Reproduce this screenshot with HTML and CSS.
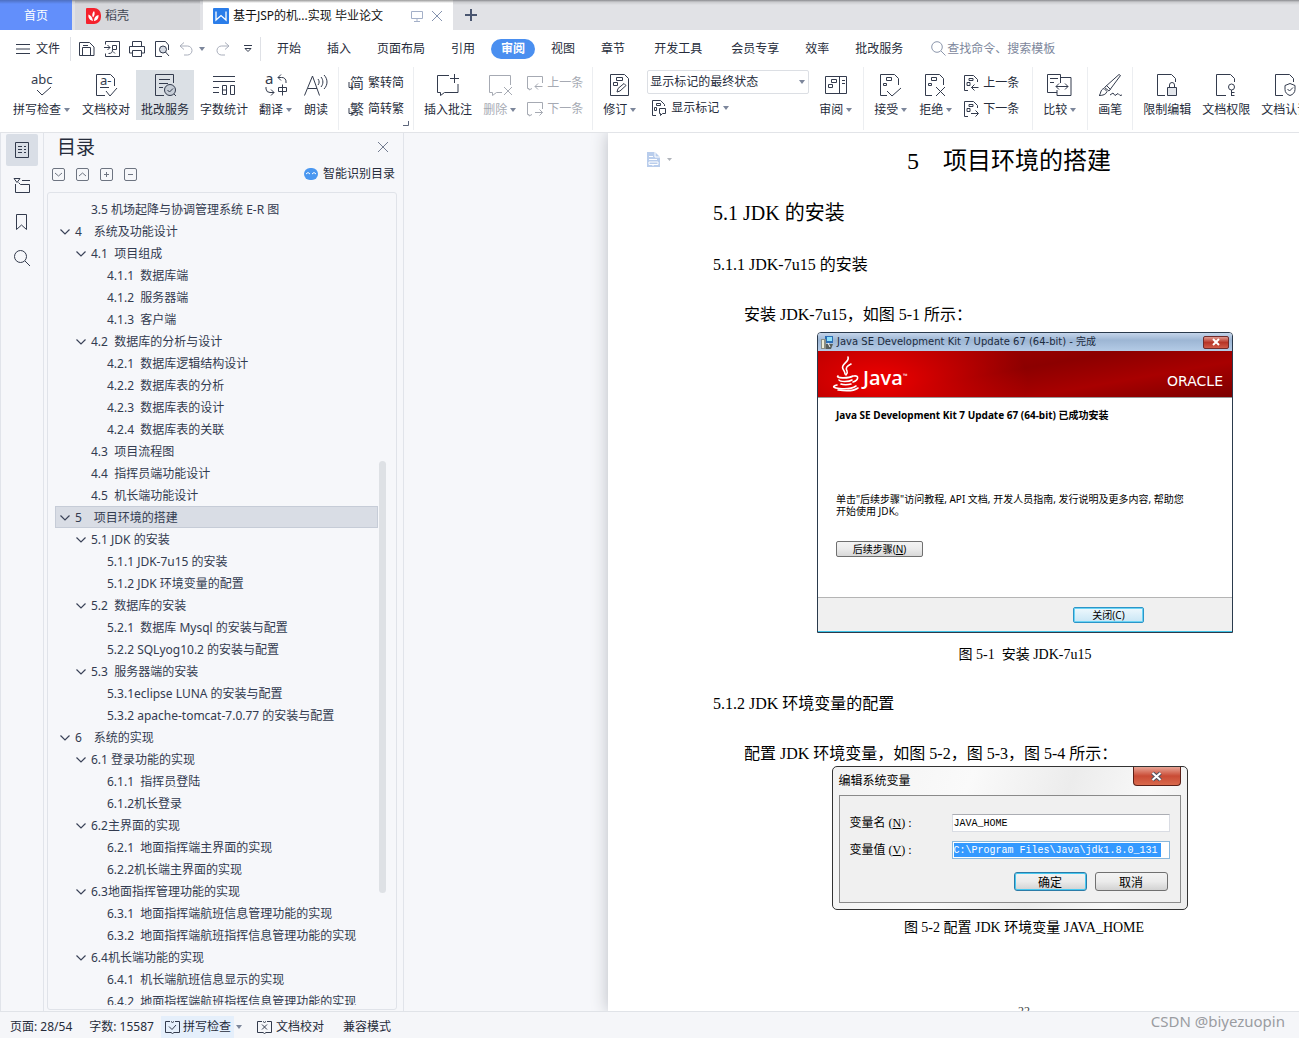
FILE: index.html
```html
<!DOCTYPE html>
<html lang="zh-CN">
<head>
<meta charset="utf-8">
<title>基于JSP的机...实现 毕业论文</title>
<link rel="stylesheet" href="styles.css">
</head>
<body>
<svg class="sprite" aria-hidden="true">
  <symbol id="caret" viewBox="0 0 6 4"><path d="M0 0h6L3 4z" fill="#7c869b"/></symbol>
  <symbol id="chev" viewBox="0 0 10 6"><path d="M.5.5 5 5 9.500.5" fill="none" stroke="#3b4358" stroke-width="1.200"/></symbol>
  <symbol id="cross" viewBox="0 0 12 12"><path d="M1 1l10 10M11 1 1 11"/></symbol>
  <symbol id="prev-doc" viewBox="0 0 16 16"><path d="M5 15.500H1.500V.5h9l4 4V7M6 3.500h4v2H6zM4 7.500h3v3H4zM15.500 12.500H8.500M11.500 9.500l-3 3 3 3"/></symbol>
  <symbol id="next-doc" viewBox="0 0 16 16"><path d="M5 15.500H1.500V.5h9l4 4V7M6 3.500h4v2H6zM4 7.500h3v3H4zM8 12.500h7M12.500 9.500l3 3-3 3"/></symbol>
</svg>

<header class="tabs">
  <button class="tab tab-home" type="button">首页</button>
  <button class="tab tab-store" type="button">
    <svg width="15" height="16" viewBox="0 0 15 16"><path d="M1 0h7a7 7 0 0 1 7 7v2a7 7 0 0 1-7 7H1a1 1 0 0 1-1-1V1a1 1 0 0 1 1-1z" fill="#f5222d"/><path d="M7 13C3 12 2 9 2.500 6.500 5 7.500 6.500 9.500 7 13zM7 9.500C5.500 7 6.500 4.500 8 3c1.200 2 .8 4.500-1 6.500zM8 13c0-3.500 1.500-5.500 4.500-6C12.800 10 11.500 12.500 8 13z" fill="#fff"/></svg>
    稻壳</button>
  <div class="tab tab-doc">
    <svg width="16" height="16" viewBox="0 0 16 16"><rect width="16" height="16" rx="1" fill="#2b7de9"/><path d="M3 3.500v8.500l5-4.500 5 4.500V3.500" fill="none" stroke="#fff" stroke-width="1.300"/></svg>
    <span class="tab-name">基于JSP的机...实现 毕业论文</span>
    <svg class="line pale" width="12" height="12" viewBox="0 0 12 12"><path d="M.5 1.500h11v7H.5zM6 8.500v3M3 11.500h6"/></svg>
    <button class="bare" type="button" aria-label="关闭标签"><svg class="line pale2" width="12" height="12"><use href="#cross"/></svg></button>
  </div>
  <button class="bare tab-add" type="button" aria-label="新建标签"><svg width="12" height="12" viewBox="0 0 12 12"><path d="M6 0v12M0 6h12" stroke="#4a5670" stroke-width="2"/></svg></button>
</header>

<nav class="menu">
  <button class="bare file" type="button"><svg class="line" width="14" height="12" viewBox="0 0 14 12"><path d="M0 1.500h14M0 6h14M0 10.500h14"/></svg>文件</button>
  <div class="quick">
    <button class="bare" type="button" aria-label="保存"><svg class="line" width="16" height="16" viewBox="0 0 16 16"><path d="M.5 14.500V1.500h10l4.500 4.500v8.500zM3.500 14V6.500h8V14M4 4.500h5"/></svg></button>
    <button class="bare" type="button" aria-label="输出为PDF"><svg class="line" width="16" height="16" viewBox="0 0 16 16"><path d="M1.500 3.500v-3h14v15h-14v-3M0 6.500h6M3.500 4l2.500 2.500L3.500 9M8.500 8.500v-4h4v4h-4c0 3-1 4-4 4M9 10.500l2 2"/></svg></button>
    <button class="bare" type="button" aria-label="打印"><svg class="line" width="16" height="16" viewBox="0 0 16 16"><path d="M3.500 5.500v-5h9v5M3.500 12H.5V5.500h15V12h-3M3.500 9.500h9v6h-9z"/></svg></button>
    <button class="bare" type="button" aria-label="打印预览"><svg class="line" width="16" height="16" viewBox="0 0 16 16"><path d="M14.500 9V4l-3-3.500h-10v15H8"/><circle cx="9" cy="8.500" r="3.500" fill="#d5dae3"/><path d="M11.500 11l3.500 4"/></svg></button>
    <button class="bare undo" type="button" aria-label="撤销"><svg class="line dim" width="14" height="16" viewBox="0 0 14 16"><path d="M5 1.500 1 5l4 3.500M1 5h7.500a4.500 4.500 0 0 1 0 9H5"/></svg><svg width="6" height="4"><use href="#caret"/></svg></button>
    <button class="bare" type="button" aria-label="恢复"><svg class="line dim" width="14" height="16" viewBox="0 0 14 16"><path d="M9 1.500 13 5 9 8.500M13 5H5.500a4.500 4.500 0 0 0 0 9H9"/></svg></button>
    <button class="bare more" type="button" aria-label="更多"><svg class="line" width="8" height="8" viewBox="0 0 8 8"><path d="M0 .5h8M1 3.500 4 6.500 7 3.500z"/></svg></button>
  </div>
  <div class="menu-items">
    <a href="#">开始</a><a href="#">插入</a><a href="#">页面布局</a><a href="#">引用</a><a href="#" class="on">审阅</a><a href="#">视图</a><a href="#">章节</a><a href="#" class="wide">开发工具</a><a href="#">会员专享</a><a href="#">效率</a><a href="#">批改服务</a>
  </div>
  <label class="search"><svg class="line" width="15" height="15" viewBox="0 0 15 15"><circle cx="6" cy="6" r="5.300"/><path d="M10 10l4.500 4.500"/></svg><input type="text" placeholder="查找命令、搜索模板" aria-label="查找命令"></label>
</nav>

<div class="ribbon">
  <div class="group">
    <button class="big" type="button"><svg class="line" width="24" height="24" viewBox="0 0 24 24"><text x="1" y="11" class="abc">abc</text><path d="M7 17l5 5 9-8"/></svg><span>拼写检查<svg class="car" width="6" height="4"><use href="#caret"/></svg></span></button>
    <button class="big" type="button"><svg class="line" width="24" height="24" viewBox="0 0 24 24"><path d="M11 22.500H2.500v-21h14l4 4V13M15 14.500H6M12 18l4 5 7-8"/><text x="6" y="12" class="aa">a-</text></svg><span>文档校对</span></button>
    <button class="big active" type="button"><svg class="line" width="24" height="24" viewBox="0 0 24 24"><path d="M11 22.500H2.500v-21h18V10M6 6.500h11M6 10.500h9M6 14.500h4"/><circle cx="17" cy="17" r="5.500" fill="#c6cdd6"/><path d="M14.500 17l2 2 3.500-3.500M21 21l2 2"/></svg><span>批改服务</span></button>
    <button class="big" type="button"><svg class="line" width="24" height="24" viewBox="0 0 24 24"><path d="M1 3.500h22M1 8.500h22M1 14.500h6M1 19.500h6M10.500 12.500h4v9h-4zM10.500 17h4M18.500 12.500h4v9h-4z"/></svg><span>字数统计</span></button>
    <button class="big" type="button"><svg class="line" width="24" height="24" viewBox="0 0 24 24"><text x="1" y="11" class="ax">a</text><path d="M17 1.500 14 4.500l3 3M14 4.500h3.500a4 4 0 0 1 4.500 4.500v1M2 14v2a4 4 0 0 0 4 3.500h4M7 16.500l3 3-3 3M14.500 14.500h8v4h-8zM18.500 11.500v11"/></svg><span>翻译<svg class="car" width="6" height="4"><use href="#caret"/></svg></span></button>
    <button class="big" type="button"><svg class="line" width="24" height="24" viewBox="0 0 24 24"><path d="M.5 22.500 8.500 3l7 19.500M4 15.500h9M14 6c1.500 2 1.500 4 0 6M17 4c2.500 3 2.500 7 0 10M20 2c4 4 4 10 0 14"/></svg><span>朗读</span></button>
  </div>
  <div class="group convert">
    <div class="stack">
      <button class="small" type="button"><svg class="line" width="16" height="16" viewBox="0 0 16 16"><text x="2" y="13" class="han">简</text><path d="M1 7v5.500h4M3 10.500l2 2-2 2"/></svg>繁转简</button>
      <button class="small" type="button"><svg class="line" width="16" height="16" viewBox="0 0 16 16"><text x="2" y="13" class="han">繁</text><path d="M1 7v5.500h4M3 10.500l2 2-2 2"/></svg>简转繁</button>
    </div>
    <svg class="launch" width="6" height="5" viewBox="0 0 6 5"><path d="M5.500 0v4.500H0" fill="none" stroke="#5d667b"/></svg>
  </div>
  <div class="group">
    <button class="big" type="button"><svg class="line" width="24" height="24" viewBox="0 0 24 24"><path d="M13 2.500H1.500v17h3v3l4-3h13.500V11M18.500 1v9M14 5.500h9"/></svg><span>插入批注</span></button>
    <button class="big off" type="button"><svg class="line" width="24" height="24" viewBox="0 0 24 24"><path d="M22.500 12V2.500h-21v17h3v3l4-3H14M16 14l8 8M24 14l-8 8"/></svg><span>删除<svg class="car" width="6" height="4"><use href="#caret"/></svg></span></button>
    <div class="stack">
      <button class="small off" type="button"><svg class="line" width="16" height="16" viewBox="0 0 16 16"><path d="M15.500 8V1.500H.5v12H2V15l3-1.500M15.500 11.500H8M11 8.500l-3 3 3 3"/></svg>上一条</button>
      <button class="small off" type="button"><svg class="line" width="16" height="16" viewBox="0 0 16 16"><path d="M15.500 8V1.500H.5v12H2V15l3-1.500M8 11.500h7.500M12.500 8.500l3 3-3 3"/></svg>下一条</button>
    </div>
  </div>
  <div class="group">
    <button class="big" type="button"><svg class="line" width="24" height="24" viewBox="0 0 24 24"><path d="M2.500 1.500h14l4 4v17h-18zM8.500 4.500h6v3h-6zM5.500 9.500h4v3h-4zM9 19l1-3.500 6-5 2 2-6 5.500z"/></svg><span>修订<svg class="car" width="6" height="4"><use href="#caret"/></svg></span></button>
    <div class="stack marks">
      <div class="select"><select aria-label="标记显示状态"><option>显示标记的最终状态</option></select><svg width="6" height="4"><use href="#caret"/></svg></div>
      <button class="small" type="button"><svg class="line" width="16" height="16" viewBox="0 0 16 16"><path d="M5 15.500H1.500V.5h8l4 4V6M5.500 3.500h4v2h-4zM3.500 7.500h2v3h-2zM8.500 8.500h6v5h-3l-2 2v-2h-1z"/></svg>显示标记<svg width="6" height="4"><use href="#caret"/></svg></button>
    </div>
    <button class="big" type="button"><svg class="line" width="24" height="24" viewBox="0 0 24 24"><path d="M1.500 3.500h21v17h-21zM15.500 3.500v17M7.500 6.500h5v3h-5zM4.500 11.500h4v3h-4zM18 7.500h3M18 10.500h3"/></svg><span>审阅<svg class="car" width="6" height="4"><use href="#caret"/></svg></span></button>
  </div>
  <div class="group accept">
    <button class="big" type="button"><svg class="line" width="24" height="24" viewBox="0 0 24 24"><path d="M8 22.500H1.500v-21h14l4 4V12M7.500 4.500h5v3h-5zM4.500 10.500h3v2h-3zM8 18l5 5 9-8"/></svg><span>接受<svg class="car" width="6" height="4"><use href="#caret"/></svg></span></button>
    <button class="big" type="button"><svg class="line" width="24" height="24" viewBox="0 0 24 24"><path d="M8 22.500H1.500v-21h14l4 4V12M7.500 4.500h5v3h-5zM4.500 10.500h3v2h-3zM12 14l9 9M21 14l-9 9"/></svg><span>拒绝<svg class="car" width="6" height="4"><use href="#caret"/></svg></span></button>
    <div class="stack">
      <button class="small" type="button"><svg class="line" width="16" height="16"><use href="#prev-doc"/></svg>上一条</button>
      <button class="small" type="button"><svg class="line" width="16" height="16"><use href="#next-doc"/></svg>下一条</button>
    </div>
  </div>
  <div class="group">
    <button class="big" type="button"><svg class="line" width="24" height="24" viewBox="0 0 24 24"><path d="M9 19.500H-.5v-18h13V4M2 5.500h8M2 9.500h4M12.500 4.500h10.500v18h-14V17M8 13.500h12M11 10.500l-3 3 3 3M17 10.500l3 3-3 3M12.500 4v6"/></svg><span>比较<svg class="car" width="6" height="4"><use href="#caret"/></svg></span></button>
  </div>
  <div class="group">
    <button class="big" type="button"><svg class="line" width="24" height="24" viewBox="0 0 24 24"><path d="M1 22.500c2-1 1-6 5-7l3 3c-1 3-4 4-8 4zM6.500 14.500 21 1.500l1.500 1L11 18zM8.500 12.500l4 4M12 22l3-2 2 2.500 3-2 2 2 2-.5"/></svg><span>画笔</span></button>
  </div>
  <div class="group last">
    <button class="big" type="button"><svg class="line" width="24" height="24" viewBox="0 0 24 24"><path d="M10 22.500H2.500v-21h14l4 4V9M14.500 14v-2a2.500 2.500 0 0 1 5 0v2"/><path d="M12.500 14.500h9v8h-9z" fill="#e3e6eb"/></svg><span>限制编辑</span></button>
    <button class="big" type="button"><svg class="line" width="24" height="24" viewBox="0 0 24 24"><path d="M12 22.500H2.500v-21h14l4 4V9M17.500 17v6M17.500 19.500h3M17.500 22.500h3"/><circle cx="17.500" cy="14" r="3"/></svg><span>文档权限</span></button>
    <button class="big" type="button"><svg class="line" width="24" height="24" viewBox="0 0 24 24"><path d="M10 22.500H2.500v-21h14l4 4V9M17 10.500l5 2v4c0 3-2 5-5 6-3-1-5-3-5-6v-4zM14.500 16l2 2 3.500-3.500"/></svg><span>文档认证</span></button>
  </div>
</div>

<main class="work">
  <aside class="rail">
    <button class="on" type="button" aria-label="目录"><svg class="line" width="16" height="16" viewBox="0 0 16 16"><path d="M1.500.5h13v15h-13zM4 4.500h4M10 4.500h2M4 7.500h4M10 7.500h2M4 10.500h4M10 10.500h2"/></svg></button>
    <button type="button" aria-label="章节"><svg class="line" width="16" height="16" viewBox="0 0 16 16"><path d="M0 .5h6L3 4.500zM8 2.500h8M1.500 6v8.500h14v-8h-9l-2-2"/></svg></button>
    <button type="button" aria-label="书签"><svg class="line" width="16" height="16" viewBox="0 0 16 16"><path d="M2.500.5h10v15l-5-4.500-5 4.500z"/></svg></button>
    <button type="button" aria-label="查找"><svg class="line" width="16" height="16" viewBox="0 0 16 16"><circle cx="6.500" cy="6.500" r="6"/><path d="M11 11l5 5"/></svg></button>
  </aside>

  <section class="panel">
    <div class="panel-head"><h2>目录</h2><button class="bare" type="button" aria-label="关闭目录"><svg class="line" width="12" height="12"><use href="#cross"/></svg></button></div>
    <div class="panel-tools">
      <button type="button" aria-label="展开"><svg width="7" height="7" viewBox="0 0 7 7"><path d="M0 2l3.500 3L7 2"/></svg></button>
      <button type="button" aria-label="折叠"><svg width="7" height="7" viewBox="0 0 7 7"><path d="M0 5l3.500-3L7 5"/></svg></button>
      <button type="button" aria-label="增加"><svg width="7" height="7" viewBox="0 0 7 7"><path d="M1 3.500h5M3.500 1v5"/></svg></button>
      <button type="button" aria-label="减少"><svg width="7" height="7" viewBox="0 0 7 7"><path d="M1 3.500h5"/></svg></button>
      <a class="smart" href="#"><svg width="14" height="12" viewBox="0 0 14 12"><rect width="14" height="12" rx="6" fill="#4a97f0"/><path d="M2 6q2-3 4 0M8 6q2-3 4 0" fill="none" stroke="#fff"/></svg>智能识别目录</a>
    </div>
    <div class="toc">
      <ul>
        <li><a class="l2" href="#">3.5 机场起降与协调管理系统 E-R 图</a></li>
        <li><a class="l1" href="#"><svg><use href="#chev"/></svg>4&emsp;系统及功能设计</a></li>
        <li><a class="l2" href="#"><svg><use href="#chev"/></svg>4.1  项目组成</a></li>
        <li><a class="l3" href="#">4.1.1  数据库端</a></li>
        <li><a class="l3" href="#">4.1.2  服务器端</a></li>
        <li><a class="l3" href="#">4.1.3  客户端</a></li>
        <li><a class="l2" href="#"><svg><use href="#chev"/></svg>4.2  数据库的分析与设计</a></li>
        <li><a class="l3" href="#">4.2.1  数据库逻辑结构设计</a></li>
        <li><a class="l3" href="#">4.2.2  数据库表的分析</a></li>
        <li><a class="l3" href="#">4.2.3  数据库表的设计</a></li>
        <li><a class="l3" href="#">4.2.4  数据库表的关联</a></li>
        <li><a class="l2" href="#">4.3  项目流程图</a></li>
        <li><a class="l2" href="#">4.4  指挥员端功能设计</a></li>
        <li><a class="l2" href="#">4.5  机长端功能设计</a></li>
        <li><a class="l1 sel" href="#"><svg><use href="#chev"/></svg>5&emsp;项目环境的搭建</a></li>
        <li><a class="l2" href="#"><svg><use href="#chev"/></svg>5.1 JDK 的安装</a></li>
        <li><a class="l3" href="#">5.1.1 JDK-7u15 的安装</a></li>
        <li><a class="l3" href="#">5.1.2 JDK 环境变量的配置</a></li>
        <li><a class="l2" href="#"><svg><use href="#chev"/></svg>5.2  数据库的安装</a></li>
        <li><a class="l3" href="#">5.2.1  数据库 Mysql 的安装与配置</a></li>
        <li><a class="l3" href="#">5.2.2 SQLyog10.2 的安装与配置</a></li>
        <li><a class="l2" href="#"><svg><use href="#chev"/></svg>5.3  服务器端的安装</a></li>
        <li><a class="l3" href="#">5.3.1eclipse LUNA 的安装与配置</a></li>
        <li><a class="l3" href="#">5.3.2 apache-tomcat-7.0.77 的安装与配置</a></li>
        <li><a class="l1" href="#"><svg><use href="#chev"/></svg>6&emsp;系统的实现</a></li>
        <li><a class="l2" href="#"><svg><use href="#chev"/></svg>6.1 登录功能的实现</a></li>
        <li><a class="l3" href="#">6.1.1  指挥员登陆</a></li>
        <li><a class="l3" href="#">6.1.2机长登录</a></li>
        <li><a class="l2" href="#"><svg><use href="#chev"/></svg>6.2主界面的实现</a></li>
        <li><a class="l3" href="#">6.2.1  地面指挥端主界面的实现</a></li>
        <li><a class="l3" href="#">6.2.2机长端主界面的实现</a></li>
        <li><a class="l2" href="#"><svg><use href="#chev"/></svg>6.3地面指挥管理功能的实现</a></li>
        <li><a class="l3" href="#">6.3.1  地面指挥端航班信息管理功能的实现</a></li>
        <li><a class="l3" href="#">6.3.2  地面指挥端航班指挥信息管理功能的实现</a></li>
        <li><a class="l2" href="#"><svg><use href="#chev"/></svg>6.4机长端功能的实现</a></li>
        <li><a class="l3" href="#">6.4.1  机长端航班信息显示的实现</a></li>
        <li><a class="l3" href="#">6.4.2  地面指挥端航班指挥信息管理功能的实现</a></li>
      </ul>
      <div class="track"><div class="thumb"></div></div>
    </div>
  </section>

  <section class="canvas">
    <article class="paper">
      <div class="para-tool"><svg width="13" height="15" viewBox="0 0 13 15"><path d="M0 0h8l5 5v10H0z" fill="#b9cdec"/><path d="M8 0v5h5M2 4.500h4M2 7.500h8M2 10h9v2.500H2zM6 12v2" fill="none" stroke="#fff"/></svg><svg width="5" height="3" viewBox="0 0 5 3"><path d="M0 0h5L2.500 3z" fill="#b0b4bb"/></svg></div>
      <h1>5&emsp;项目环境的搭建</h1>
      <h2>5.1 JDK 的安装</h2>
      <h3>5.1.1 JDK-7u15 的安装</h3>
      <p>安装 JDK-7u15，如图 5-1 所示：</p>
      <figure>
        <div class="setup">
          <div class="setup-title"><svg width="13" height="13" viewBox="0 0 13 13"><path d="M4 0h8v7H4z" fill="#2c6fb5"/><path d="M6 1h5v4H6z" fill="#8fe0f7"/><path d="M0 3h5v10H0z" fill="#8b8f86"/><path d="M1 4h2v8H1z" fill="#efefd8"/><path d="M5 8h7l-2 5H5z" fill="#59605c"/><path d="M7 7l2 4" stroke="#fff"/></svg><span>Java SE Development Kit 7 Update 67 (64-bit) - 完成</span><button type="button" aria-label="关闭"><svg width="8" height="6" viewBox="0 0 8 6"><path d="M1 0l6 6M7 0 1 6" stroke="#fff" stroke-width="2"/></svg></button></div>
          <div class="setup-banner">
            <svg width="28" height="36" viewBox="0 0 28 36"><g fill="none" stroke="#fff" stroke-width="1.600" stroke-linecap="round"><path d="M16 1c2 5-8 7-5 12 1 2 2 3 2 5M19 8c-4 2-6 4-4 7 1 2 0 3-1 4"/><path d="M6 20c-3 2 10 3 15 0M7 24c1 2 10 2 13 0M9 28c2 1 7 1 10 0M22 20c5-1 5 4-1 6M5 29c-12 3 12 6 19 1M6 34c7 1 16 1 20-2" /></g></svg>
            <span class="java">Java<small>™</small></span><span class="oracle">ORACLE</span>
          </div>
          <div class="setup-body">
            <strong>Java SE Development Kit 7 Update 67 (64-bit) 已成功安装</strong>
            <div class="setup-text">单击"后续步骤"访问教程, API 文档, 开发人员指南, 发行说明及更多内容, 帮助您<br>开始使用 JDK。</div>
            <button type="button">后续步骤(<u>N</u>)</button>
          </div>
          <div class="setup-foot"><button type="button">关闭(C)</button></div>
        </div>
        <figcaption>图 5-1&nbsp; 安装 JDK-7u15</figcaption>
      </figure>
      <h3>5.1.2 JDK 环境变量的配置</h3>
      <p>配置 JDK 环境变量，如图 5-2，图 5-3，图 5-4 所示：</p>
      <figure class="second">
        <div class="envdlg">
          <div class="env-title"><span>编辑系统变量</span><button type="button" aria-label="关闭"><svg width="11" height="9" viewBox="0 0 11 9"><path d="M1.500 1l8 7M9.500 1l-8 7" stroke="#4d5361" stroke-width="4"/><path d="M1.500 1l8 7M9.500 1l-8 7" stroke="#fff" stroke-width="2"/></svg></button></div>
          <div class="env-body">
            <div class="field"><label for="vn">变量名 (<u>N</u>) :</label><input id="vn" type="text" value="JAVA_HOME"></div>
            <div class="field"><label for="vv">变量值 (<u>V</u>) :</label><input id="vv" class="marked" type="text" value="C:\Program Files\Java\jdk1.8.0_131"></div>
            <div class="env-actions"><button class="primary" type="button">确定</button><button type="button">取消</button></div>
          </div>
        </div>
        <figcaption>图 5-2 配置 JDK 环境变量 JAVA_HOME</figcaption>
      </figure>
      <div class="folio">22</div>
    </article>
  </section>
</main>

<footer class="status">
  <span class="cell">页面: 28/54</span>
  <span class="cell">字数: 15587</span>
  <button class="cell spell" type="button"><svg class="line" width="15" height="14" viewBox="0 0 15 14"><path d="M5 1.500H.5v11H6l1.500 1 1.500-1h5.500v-11H10M6 1.500l1.500 1L9 1.500M4 6.500l3 3 4-4.500"/></svg>拼写检查</button>
  <svg class="stcar" width="6" height="4"><use href="#caret"/></svg>
  <button class="cell check" type="button"><svg class="line" width="15" height="14" viewBox="0 0 15 14"><path d="M5 1.500H.5v11H6l1.500 1 1.500-1h5.500v-11H10M6 1.500l1.500 1L9 1.500M5 4.500l5 5M10 4.500l-5 5"/></svg>文档校对</button>
  <span class="cell">兼容模式</span>
  <span class="mark">CSDN @biyezuopin</span>
</footer>
</body>
</html>
```
FILE: styles.css
```css
* { box-sizing: border-box; }
body {
  margin: 0;
  height: 100vh;
  display: flex;
  flex-direction: column;
  overflow: hidden;
  font: 12px/16px "Noto Sans", "Noto Sans CJK SC", sans-serif;
  color: #262c3b;
  background: #fff;
}
button, input, select { font: inherit; color: inherit; margin: 0; padding: 0; }
button { background: none; border: 0; white-space: nowrap; }
a { color: inherit; text-decoration: none; }
svg { flex: none; display: block; overflow: visible; }
h1, h2, h3, p, ul, figure { margin: 0; padding: 0; font-weight: 400; }
.sprite { position: absolute; width: 0; height: 0; }
.line { fill: none; stroke: #333b4d; stroke-width: 1; }
.line text { stroke: none; fill: #333b4d; }
.line.dim { stroke: #a9aebb; }
.line.pale { stroke: #a4b0c8; }
.line.pale2 { stroke: #8492ae; }
.bare { display: flex; align-items: center; }

/* tab strip */
.tabs {
  display: flex;
  flex: none;
  height: 30px;
  background: linear-gradient(#8a8b8f, #c9cacd 2px, #e1e2e6 5px);
}
.tab { display: flex; align-items: center; gap: 4px; padding-top: 2px; }
.tab-home { width: 72px; justify-content: center; padding-left: 0; background: linear-gradient(#4d6fc0, #628ffb 4px); color: #fff; }
.tab-store { width: 125px; margin: 0 3px; padding-left: 11px; background: linear-gradient(#8a8b8f, #d7d8dc 4px); color: #3f4552; }
.tab-doc { width: 250px; padding-left: 10px; padding-right: 10px; background: linear-gradient(#9b9b9b, #fff 3px); color: #111; }
.tab-name { flex: 1; white-space: nowrap; }
.tab-doc .bare { margin-left: 4px; }
.tab-add { margin-left: 12px; }

/* menu row */
.menu { display: flex; flex: none; align-items: center; height: 37px; padding-left: 16px; }
.file { gap: 6px; height: 24px; padding-right: 10px; border-right: 1px solid #dfe1e6; }
.quick { display: flex; align-items: center; gap: 9px; height: 24px; padding: 0 8px; width: 190px; border-right: 1px solid #dfe1e6; }
.undo { gap: 6px; margin-right: 2px; }
.more { margin-left: 5px; }
.menu-items { display: flex; align-items: center; gap: 26px; padding: 1px 0 0 16px; white-space: nowrap; }
.menu-items .on { margin: 0 -10px; padding: 2px 10px; border-radius: 10px; background: #4a8ff0; color: #fff; font-weight: 700; }
.menu-items .wide { margin: 0 3px; }
.search { display: flex; align-items: center; gap: 1px; margin-left: 28px; }
.search .line { stroke: #8c97ac; }
.search input { width: 140px; border: 0; background: none; }
.search input::placeholder { color: #7d879c; opacity: 1; }

/* ribbon */
.ribbon {
  display: flex;
  flex: none;
  height: 65px;
  padding: 0 0 2px 3px;
  overflow: hidden;
}
.group { display: flex; flex: none; align-items: flex-start; gap: 1px; padding: 3px 5px 0; border-right: 1px solid #eceef1; }
.group.last { border-right: 0; }
.group.accept { padding-right: 9px; }
.big { display: flex; flex-direction: column; align-items: center; gap: 5px; height: 50px; padding: 3px 5px 2px; }
.big span { display: flex; align-items: center; }
.big.active { background: #dbe0e5; }
.car { margin: 0 1px 0 3px; }
.off { color: #a6aab3; }
.off .line { stroke: #a6aab3; }
.stack { display: flex; flex-direction: column; }
.small { display: flex; align-items: center; gap: 4px; height: 26px; padding: 0 4px; }
.marks { gap: 1px; margin: 0 4px; width: 162px; }
.marks .small { padding-left: 4px; }
.select { position: relative; height: 24px; }
.select select { appearance: none; width: 100%; height: 100%; padding: 0 2px; border: 1px solid #dcdfe4; border-radius: 2px; background: #fff; }
.select svg { position: absolute; right: 4px; top: 10px; pointer-events: none; }
.convert { position: relative; }
.launch { position: absolute; right: 4px; bottom: 4px; }
.abc { font-size: 13px; }
.aa { font-size: 13px; }
.ax { font-size: 15px; }
.han { font-size: 14px; }

/* work area */
.work { display: flex; flex: 1; min-height: 0; border-top: 1px solid #e2e4e8; background: #f6f7fa; }
.rail { display: flex; flex-direction: column; gap: 4px; width: 44px; padding: 1px 5px; border: solid #e1e4ea; border-width: 0 1px; }
.rail button { display: flex; align-items: center; justify-content: center; width: 32px; height: 32px; border-radius: 2px; }
.rail .on { background: #d9dee6; }
.panel { display: flex; flex: none; flex-direction: column; width: 360px; padding: 0 6px 1px 3px; border-right: 1px solid #e1e4ea; }
.panel-head { display: flex; align-items: center; justify-content: space-between; height: 28px; padding: 0 8px 0 10px; }
.panel-head h2 { font-size: 19px; line-height: 28px; }
.panel-head .line { stroke: #737c90; }
.panel-tools { display: flex; align-items: center; gap: 11px; height: 26px; padding: 0 2px 0 5px; }
.panel-tools button { display: flex; align-items: center; justify-content: center; width: 13px; height: 13px; border: 1px solid #6d7481; border-radius: 2px; }
.panel-tools button svg { fill: none; stroke: #6d7481; }
.smart { display: flex; align-items: center; gap: 5px; margin-left: auto; }
.toc { display: flex; flex: 1; min-height: 0; margin-top: 5px; padding: 5px 10px 4px 7px; border: 1px solid #e0e3e9; border-radius: 3px; }
.toc ul { flex: 1; overflow: hidden; list-style: none; color: #333b50; }
.toc a { display: flex; align-items: center; gap: 5px; height: 22px; padding-top: 2px; white-space: pre; }
.toc a svg { width: 10px; height: 6px; margin-left: -15px; }
.toc .l1 { padding-left: 20px; }
.toc .l2 { padding-left: 36px; }
.toc .l3 { padding-left: 52px; }
.toc .sel { background: #d9dde5; outline: 1px solid #c6ccd7; outline-offset: -1px; }
.track { display: flex; flex-direction: column; width: 8px; padding: 263px 0 112px 1px; }
.thumb { flex: 1; border-radius: 4px; background: #dee1e5; }

/* document */
.canvas { display: flex; flex: 1; min-width: 0; overflow: hidden; padding-left: 204px; background: #f6f7fa; }
.paper {
  position: relative;
  flex: 0 0 794px;
  padding: 12px 67px 0 105px;
  background: #fff;
  box-shadow: 0 0 16px #b9bcc3;
  color: #000;
  font-family: "Liberation Serif", "Noto Sans CJK SC", serif;
}
.para-tool { position: absolute; left: 39px; top: 19px; display: flex; align-items: center; gap: 7px; }
.paper h1 { padding-right: 30px; text-align: center; font-size: 24px; line-height: 32px; }
.paper h2 { margin-top: 23px; font-size: 20px; line-height: 26px; }
.paper h3 { margin-top: 28px; font-size: 16px; line-height: 22px; }
.paper p { margin-top: 27px; padding-left: 31px; font-size: 16px; line-height: 24px; }
.paper figure { display: flex; flex-direction: column; align-items: center; margin-top: 5px; padding-left: 2px; }
.paper .second { margin-top: 0; padding-left: 0; }
figcaption { margin-top: 12px; font-size: 14px; line-height: 20px; }
.second figcaption { margin-top: 8px; }
.folio { margin-top: 66px; text-align: center; font-size: 12px; line-height: 14px; color: #444; }

/* installer window */
.setup { width: 416px; height: 301px; display: flex; flex-direction: column; border: 1px solid #2a3a4c; border-radius: 4px 4px 0 0; background: #fff; font: 10px/12px "Noto Sans", "Noto Sans CJK SC", sans-serif; overflow: hidden; }
.setup-title { display: flex; align-items: center; gap: 3px; height: 18px; padding: 0 3px; background: linear-gradient(#c5d5ea, #9db6d4 40%, #b4cbe6); color: #1c2b3d; }
.setup-title span { flex: 1; font-family: "DejaVu Sans", "Noto Sans CJK SC", sans-serif; }
.setup-title button { display: flex; align-items: center; justify-content: center; width: 26px; height: 13px; border: 1px solid #6e2b2b; border-radius: 2px; background: linear-gradient(#e09a90, #b83527 50%, #cf5a48); }
.setup-banner { display: flex; align-items: center; height: 47px; padding: 0 9px 0 14px; background: radial-gradient(ellipse 150px 70px at 60px 30px, #f00000, #d8000088 60%, transparent), linear-gradient(170deg, #a00000 10%, #8c0000 45%, #a80000 70%, #7c0000); border-bottom: 1px solid #999; color: #fff; }
.java { flex: 1; padding: 5px 0 0 3px; font: 600 20px/24px "Open Sans", sans-serif; }
.java small { font-size: 6px; vertical-align: 7px; }
.oracle { padding-top: 14px; font: 14px/16px "DejaVu Sans", sans-serif; }
.setup-body { flex: 1; padding: 11px 18px 0; }
.setup strong { display: block; }
.setup-text { margin-top: 72px; white-space: nowrap; }
.setup-body button, .setup-foot button { border: 1px solid #707070; border-radius: 2px; background: linear-gradient(#f4f4f4, #ebebeb 50%, #d8d8d8); line-height: 14px; }
.setup-body button { width: 87px; margin-top: 24px; }
.setup-foot { display: flex; justify-content: flex-end; align-items: center; height: 35px; padding-right: 88px; border-top: 1px solid #b4b4b4; border-bottom: 1px solid #3fc3e6; background: #f0f0f0; }
.setup-foot button { width: 71px; border: 1px solid #2c95c8; box-shadow: inset 0 0 0 1px #6bd4f5; background: linear-gradient(#eef8fd, #c9e6f5); }

/* environment variable window */
.envdlg { width: 356px; height: 144px; display: flex; flex-direction: column; margin-right: 29px; padding: 0 6px 6px; border: 1px solid #333; border-radius: 5px; background: linear-gradient(110deg, #f2f2f2, #fafafa 35%, #ececec 60%, #f8f8f8 80%, #ececec); font: 12px/16px "Noto Sans CJK SC", sans-serif; }
.env-title { display: flex; align-items: flex-start; justify-content: space-between; height: 28px; }
.env-title span { padding-top: 5px; }
.env-title button { display: flex; align-items: center; justify-content: center; width: 48px; height: 19px; border: 1px solid #5c1f17; border-top: 0; border-radius: 0 0 4px 4px; background: linear-gradient(#e9a596, #c94b35 50%, #d9694c); }
.env-body { flex: 1; padding: 18px 10px 0; border: 1px solid #8a8a8a; background: #f0f0f0; }
.field { display: flex; align-items: center; justify-content: space-between; margin-bottom: 9px; }
.field label { font: 12px/18px "Liberation Serif", "Noto Sans CJK SC", serif; }
.field input { width: 218px; height: 18px; padding: 1px; border: 1px solid #d9dce3; border-top-color: #abadb3; background: #fff; font: 10px/14px "Liberation Mono", monospace; }
.field .marked { padding-right: 8px; border-color: #8ab8dc; background: linear-gradient(#39f, #39f) content-box, #fff; color: #fff; }
.env-actions { display: flex; justify-content: flex-end; gap: 8px; padding: 4px 2px 0 0; }
.env-actions button { width: 73px; height: 19px; border: 1px solid #707070; border-radius: 3px; background: linear-gradient(#f3f3f3, #ebebeb 50%, #d2d2d2); line-height: 16px; }
.env-actions .primary { border-color: #2b7ca8; box-shadow: inset 0 0 0 1px #47c8f0; }

/* status bar */
.status { position: relative; display: flex; flex: none; align-items: center; height: 27px; padding-top: 3px; border-top: 1px solid #e0e3e8; background: #f5f6f9; }
.cell { display: flex; align-items: center; gap: 3px; height: 22px; padding-left: 10px; }
.cell + .cell { padding-left: 17px; }
.cell + .cell.spell { margin-left: 7px; padding: 0 3px 0 4px; background: #e5effb; }
.stcar { margin: 0 15px 0 2px; }
.cell.check { padding: 0 2px 0 0; gap: 4px; }
.mark { position: absolute; right: 14px; top: 0; font: 15px/18px "Noto Sans", sans-serif; color: #9a9ca1; }
```
